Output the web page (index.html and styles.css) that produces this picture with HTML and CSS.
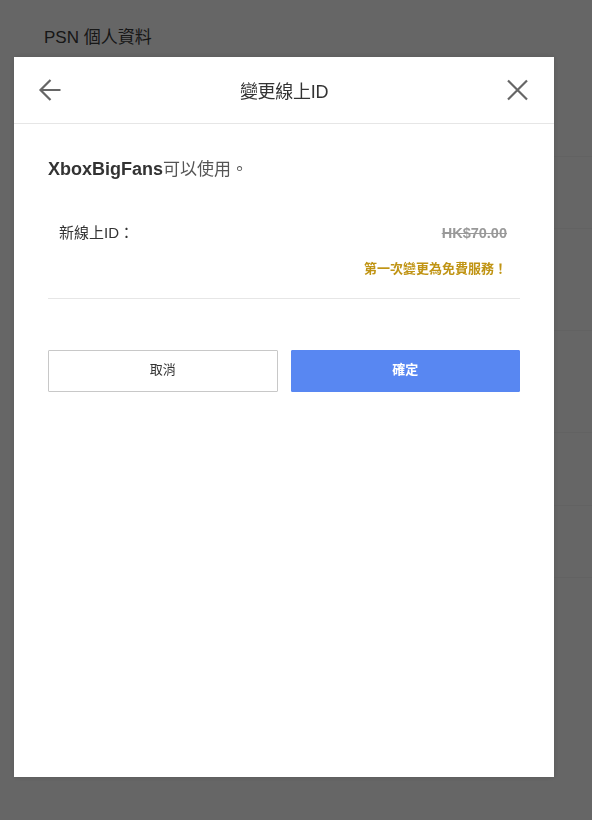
FILE: index.html
```html
<!DOCTYPE html>
<html lang="zh-Hant">
<head>
<meta charset="utf-8">
<title>變更線上ID</title>
<link rel="stylesheet" href="styles.css">
</head>
<body>
<div class="page">
  <h1 class="page-title">PSN 個人資料</h1>
  <div class="page-rows">
    <div class="page-row r1"></div>
    <div class="page-row r2"></div>
    <div class="page-row r3"></div>
    <div class="page-row r4"></div>
    <div class="page-row r5"></div>
    <div class="page-row r6"></div>
  </div>
</div>
<div class="overlay"></div>
<div class="modal">
  <div class="modal-header">
    <svg class="hdr-icon" width="28" height="28" viewBox="0 0 28 28" aria-hidden="true">
      <path d="M2.5 14H22.5M12.5 4L2.5 14L12.5 24" fill="none" stroke="#666" stroke-width="2.2"/>
    </svg>
    <div class="modal-title">變更線上ID</div>
    <svg class="hdr-icon" width="28" height="28" viewBox="0 0 28 28" aria-hidden="true">
      <path d="M6 4.5L25 23.5M25 4.5L6 23.5" fill="none" stroke="#666" stroke-width="2.2"/>
    </svg>
  </div>
  <div class="modal-body">
    <p class="avail"><b>XboxBigFans</b>可以使用。</p>
    <div class="price-block">
      <div class="price-row">
        <span class="label">新線上ID：</span>
        <span class="old-price">HK$70.00</span>
      </div>
      <div class="free-note">第一次變更為免費服務！</div>
    </div>
    <div class="actions">
      <button class="btn btn-cancel">取消</button>
      <button class="btn btn-ok">確定</button>
    </div>
  </div>
</div>
</body>
</html>
```

FILE: styles.css
```css
html, body {
  margin: 0;
  padding: 0;
}
body {
  background: #ffffff;
  font-family: "Liberation Sans", "Noto Sans CJK TC", sans-serif;
  color: #333;
  width: 592px;
  height: 820px;
  overflow: hidden;
}
.page {
  padding: 26px 0 0 44px;
}
.page-title {
  margin: 0;
  font-size: 17px;
  font-weight: normal;
  line-height: 24px;
  color: #3a3a3a;
}
.page-rows {
  margin-left: -14px;
}
.page-row {
  border-bottom: 1px solid #f6f6f6;
}
.r1 { height: 106px; }
.r2 { height: 71px; }
.r3 { height: 101px; }
.r4 { height: 101px; }
.r5 { height: 72px; }
.r6 { height: 71px; }
.overlay {
  position: fixed;
  inset: 0;
  background: rgba(0, 0, 0, 0.6);
}
.modal {
  position: fixed;
  left: 14px;
  top: 57px;
  width: 540px;
  height: 720px;
  background: #fff;
  box-shadow: 0 0 6px rgba(0, 0, 0, 0.15);
}
.modal-header {
  height: 67px;
  display: flex;
  align-items: center;
  padding: 0 24px;
  border-bottom: 1px solid #e6e6e6;
  box-sizing: border-box;
}
.hdr-icon {
  flex: none;
  display: block;
}
.modal-title {
  flex: 1;
  text-align: center;
  font-size: 18px;
  color: #333;
  letter-spacing: -0.3px;
}
.modal-body {
  padding: 33px 34px 0;
}
.avail {
  margin: 0;
  font-size: 17px;
  line-height: 24px;
  color: #555;
}
.avail b {
  font-size: 18px;
  color: #333;
}
.price-block {
  margin-top: 40px;
  padding: 0 13px 18px 11px;
  border-bottom: 1px solid #e6e6e6;
}
.price-row {
  display: flex;
  justify-content: space-between;
  align-items: center;
  line-height: 22px;
}
.label {
  font-size: 15px;
  color: #333;
}
.old-price {
  font-size: 14.5px;
  font-weight: bold;
  color: #999;
  text-decoration: line-through;
}
.free-note {
  margin-top: 14px;
  text-align: right;
  font-size: 13px;
  line-height: 22px;
  font-weight: bold;
  color: #c09414;
}
.actions {
  margin-top: 51px;
  display: flex;
  gap: 13px;
}
.btn {
  flex: 1;
  height: 42px;
  font-family: inherit;
  font-size: 13px;
  line-height: 18px;
  padding: 0 0 2px;
  cursor: pointer;
  border-radius: 1px;
}
.btn-cancel {
  background: #fff;
  border: 1px solid #c8c8c8;
  color: #333;
}
.btn-ok {
  background: #5887f2;
  border: 1px solid #5887f2;
  color: #fff;
  font-weight: bold;
}
```
